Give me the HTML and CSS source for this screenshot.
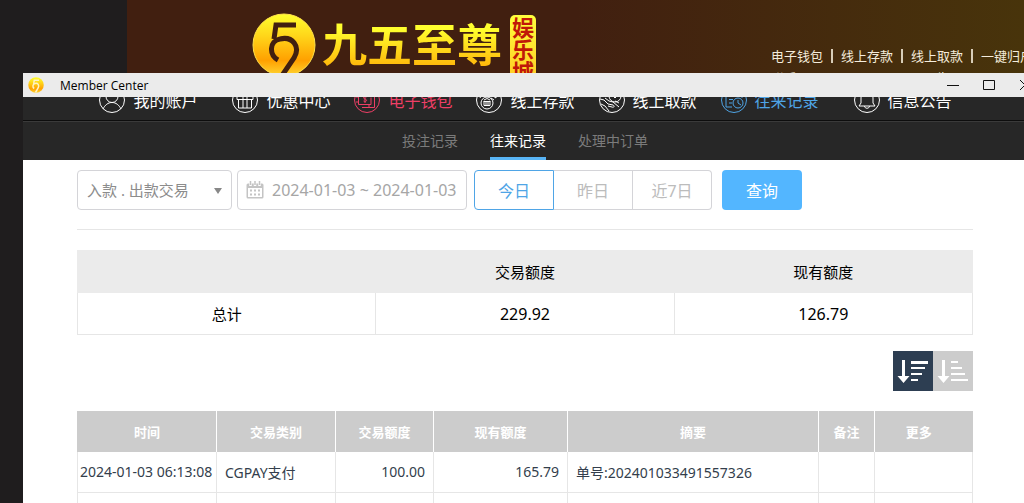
FILE: index.html
```html
<!DOCTYPE html>
<html lang="zh-CN">
<head>
  <meta charset="UTF-8" />
  <meta name="viewport" content="width=device-width, initial-scale=1.0"/>
  <title>Member Center</title>
  <link rel="stylesheet" href="styles.css">
</head>
<body>

  <header class="site-header">
    <a href="#" class="logo">
      <svg class="logo-mark" viewBox="0 0 64 64" aria-hidden="true">
        <defs>
          <linearGradient id="gold" x1="0" y1="0" x2="0" y2="1">
            <stop offset="0" stop-color="#ffff2e"/>
            <stop offset="0.35" stop-color="#ffd61a"/>
            <stop offset="0.75" stop-color="#ffa000"/>
            <stop offset="1" stop-color="#ffd633"/>
          </linearGradient>
        </defs>
        <circle cx="32" cy="32" r="31" fill="url(#gold)" stroke="#ffe14a"/>
        <path d="M44 12H24L22 26" fill="none" stroke="#411f10" stroke-width="5"/>
        <path d="M26 47C17 42 17 28 28 26C40 23 49 33 42 45L29 64" fill="none" stroke="#411f10" stroke-width="5"/>
      </svg>
      <span class="logo-name">九五至尊</span>
      <span class="logo-badge">娱乐城</span>
    </a>
    <nav class="quick">
      <div class="quick-row">
        <a href="#">电子钱包</a>
        <a href="#">线上存款</a>
        <a href="#">线上取款</a>
        <a href="#">一键归户</a>
      </div>
      <div class="quick-row quick-more">
        <a href="#">联系</a>
        <a href="#">公告</a>
      </div>
    </nav>
  </header>

  <div class="window">
    <div class="titlebar">
      <svg class="app-icon" viewBox="0 0 64 64" aria-hidden="true">
        <circle cx="32" cy="32" r="31" fill="url(#gold)"/>
        <path d="M44 13H25L23 26M25 46C17 41 18 28 28 26C40 23 46 33 41 43L30 62" fill="none" stroke="#fff3c4" stroke-width="6"/>
      </svg>
      <span class="title">Member Center</span>
      <div class="controls">
        <button aria-label="Minimize"><svg viewBox="0 0 12 12"><path d="M0 6.5h12"/></svg></button>
        <button aria-label="Maximize"><svg viewBox="0 0 12 12"><path d="M.5 1.5h11v9H.5z"/></svg></button>
        <button aria-label="Close"><svg viewBox="0 0 12 12"><path d="M1 1l10 10M11 1L1 11"/></svg></button>
      </div>
    </div>

    <div class="view">
      <nav class="main-nav">
        <a href="#">
          <svg viewBox="0 0 28 28"><circle cx="14" cy="14" r="12.5"/><circle cx="14" cy="10.5" r="6"/><path d="M5 23c2-4 5-6.500 9-6.500s7 2.500 9 6.500"/></svg>
          我的账户
        </a>
        <div class="nav-group">
          <a href="#">
            <svg viewBox="0 0 28 28"><circle cx="14" cy="14" r="12.500"/><path d="M6 9.500h16v4H6zM7.500 13.500v8.500h13v-8.500M12 9.500V22M16 9.500V22M14 9C9 8 8 4 11 5s3 4 3 4 0-3 3-4 2 3-3 4"/></svg>
            优惠中心
          </a>
          <a href="#" class="hot">
            <svg viewBox="0 0 28 28"><circle cx="14" cy="14" r="12.500"/><path d="M18 18.500H5.500V8H20v3M9 21.500h12.500V11M16 21.500v-3h2v-7M3 11h2.500M3 16h2.500M13.500 11c-3-1.500-4 1.500-1.500 2s2 3.500-1.500 2M12 9.500V17"/></svg>
            电子钱包
          </a>
          <a href="#">
            <svg viewBox="0 0 28 28"><circle cx="14" cy="14" r="12.500"/><circle cx="12" cy="17" r="6"/><path d="M8.500 15.500h7M9 15.500v4h6v-4M11 15.500v4M13 15.500v4M9 14l3-1.500 3 1.500M5 12c2-5 6-7 10-5l2 3M18 9l3 1M20 6v6l3-2M16 12l3 2"/></svg>
            线上存款
          </a>
          <a href="#">
            <svg viewBox="0 0 28 28"><circle cx="14" cy="14" r="12.500"/><circle cx="17" cy="10" r="6"/><path d="M14 9l3 3 3-3M2 13l4 1 4 4 5 1c2 1 1 3-1 2l-4-1M7 12l4 3 4 1 6 5M3 18l4 2 4 5M21 17l-4-2"/></svg>
            线上取款
          </a>
          <a href="#" class="current">
            <svg viewBox="0 0 28 28"><circle cx="14" cy="14" r="12.500"/><path d="M12 21H6V6h13v5M9 10h7M9 13.500h4M9 17h3M6 6l3-2h13v8"/><circle cx="18" cy="17" r="5"/><path d="M18 14v3l3 2"/></svg>
            往来记录
          </a>
        </div>
        <a href="#">
          <svg viewBox="0 0 28 28"><circle cx="14" cy="14" r="12.500"/><path d="M6 20h16l-2-3v-5c0-4-2-6-6-6s-6 2-6 6v5zM11.500 20c0 3 5 3 5 0"/></svg>
          信息公告
        </a>
      </nav>

      <nav class="sub-nav">
        <a href="#">投注记录</a>
        <a href="#" class="active">往来记录</a>
        <a href="#">处理中订单</a>
      </nav>

      <main class="content">
        <form class="filters">
          <div class="select-box">
            <select aria-label="交易类型">
              <option>入款 . 出款交易</option>
            </select>
          </div>
          <label class="date-box">
            <svg viewBox="0 0 18 18" aria-hidden="true">
              <path d="M2 2.500h14a1.500 1.500 0 0 1 1.500 1.500v12a1.500 1.500 0 0 1-1.500 1.500H2A1.500 1.500 0 0 1 .5 16V4A1.500 1.500 0 0 1 2 2.500z" fill="#c4c4c4"/>
              <path d="M2 7h14v9H2z" fill="#fff"/>
              <path d="M4 8.500h2v2H4zM8 8.500h2v2H8zM12 8.500h2v2h-2zM4 12.500h2v2H4zM8 12.500h2v2H8zM12 12.500h2v2h-2z" fill="#c4c4c4"/>
              <path d="M4.500 0v5M9 0v5M13.500 0v5" stroke="#fff" stroke-width="2.500"/>
              <path d="M4.500 0v4M9 0v4M13.500 0v4" stroke="#c4c4c4" stroke-width="1.500"/>
            </svg>
            <input type="text" value="2024-01-03 ~ 2024-01-03" aria-label="日期">
          </label>
          <div class="days">
            <button type="button" class="on">今日</button>
            <button type="button">昨日</button>
            <button type="button">近7日</button>
          </div>
          <button type="button" class="search">查询</button>
        </form>

        <table class="summary">
          <thead>
            <tr><th></th><th>交易额度</th><th>现有额度</th></tr>
          </thead>
          <tbody>
            <tr><td>总计</td><td class="total">229.92</td><td class="total">126.79</td></tr>
          </tbody>
        </table>

        <div class="sort">
          <button class="on" aria-label="降序">
            <svg viewBox="0 0 40 40"><path d="M9 9h3v16h4.500l-6 7-6-7H9zM18 10h17v3H18zM18 16h14v2H18zM18 22h11v2H18zM18 28h7v2h-7z"/></svg>
          </button>
          <button aria-label="升序">
            <svg viewBox="0 0 40 40"><path d="M9 9h3v16h4.500l-6 7-6-7H9zM18 10h7v2h-7zM18 16h11v2H18zM18 22h14v2H18zM18 28h17v2H18z"/></svg>
          </button>
        </div>

        <table class="records">
          <colgroup>
            <col class="c-time"><col class="c-type"><col class="c-amount"><col class="c-balance"><col class="c-summary"><col class="c-note"><col class="c-more">
          </colgroup>
          <thead>
            <tr>
              <th>时间</th>
              <th>交易类别</th>
              <th>交易额度</th>
              <th>现有额度</th>
              <th>摘要</th>
              <th>备注</th>
              <th class="more">更多</th>
            </tr>
          </thead>
          <tbody>
            <tr>
              <td class="time">2024-01-03 06:13:08</td>
              <td>CGPAY支付</td>
              <td class="num">100.00</td>
              <td class="num">165.79</td>
              <td>单号:202401033491557326</td>
              <td></td>
              <td></td>
            </tr>
            <tr>
              <td></td><td></td><td></td><td></td><td></td><td></td><td></td>
            </tr>
          </tbody>
        </table>
      </main>
    </div>
  </div>

</body>
</html>
```
FILE: styles.css
```css
* {
  box-sizing: border-box;
}
body {
  margin: 0;
  min-height: 100vh;
  overflow: hidden;
  background: #1f1d1e;
  font-family: "Noto Sans", "Noto Sans CJK SC", sans-serif;
}
a {
  color: inherit;
  text-decoration: none;
}
button,
input,
select {
  font-family: inherit;
}
button {
  padding: 0;
  border: none;
  cursor: pointer;
}

/* site header */
.site-header {
  display: flex;
  align-items: flex-start;
  gap: 235px;
  height: 100px;
  margin-left: 127px;
  padding-left: 125px;
  overflow: hidden;
  white-space: nowrap;
  background: linear-gradient(90deg, #411f10 50%, #48340b);
}
.logo {
  display: flex;
  flex-shrink: 0;
  padding-top: 13px;
}
.logo-mark {
  width: 64px;
  height: 64px;
}
.logo-name {
  width: 188px;
  margin-left: 6px;
  font-family: "Noto Sans CJK SC", sans-serif;
  font-size: 45px;
  font-weight: bold;
  line-height: 60px;
  color: transparent;
  background: linear-gradient(#ffff2e 20%, #ffa200 80%);
  background-clip: text;
  -webkit-background-clip: text;
}
.logo-badge {
  width: 26px;
  height: 78px;
  margin-top: 2px;
  padding-top: 2px;
  border-radius: 5px;
  background: linear-gradient(#ffff3c, #ffc020);
  color: #c01808;
  font-family: "Noto Sans CJK SC", sans-serif;
  font-size: 22px;
  font-weight: bold;
  line-height: 26px;
  writing-mode: vertical-rl;
}
.quick {
  padding-top: 49px;
  color: #f4ecdc;
  font-size: 13px;
  line-height: 14px;
}
.quick-row {
  display: flex;
}
.quick-row a + a {
  margin-left: 8px;
  padding-left: 8px;
  border-left: 2px solid #d8cdb8;
}
.quick-more {
  padding-top: 8px;
}
.quick-more a + a {
  margin-left: 126px;
  padding-left: 0;
  border-left: none;
}

/* floating window */
.window {
  position: absolute;
  top: 73px;
  left: 23px;
  right: -3px;
  bottom: 0;
  display: flex;
  flex-direction: column;
  background: #fff;
}
.titlebar {
  display: flex;
  align-items: center;
  height: 24px;
  padding-left: 5px;
  background: #ebebeb;
}
.app-icon {
  width: 16px;
  height: 16px;
}
.title {
  margin-left: 16px;
  font-family: "Open Sans", sans-serif;
  font-size: 12px;
}
.controls {
  display: flex;
  gap: 24px;
  margin-left: auto;
  margin-right: -4px;
}
.controls button {
  display: flex;
  background: none;
}
.controls svg {
  width: 12px;
  height: 12px;
  fill: none;
  stroke: #111;
}
.view {
  flex: 1;
  overflow: hidden;
}

/* navigation, scrolled slightly under the title bar */
.main-nav {
  display: flex;
  justify-content: center;
  gap: 34px;
  height: 42px;
  margin-top: -18px;
  border-bottom: 1px solid #0d0d0d;
  background: #272727;
  color: #fff;
  font-size: 16px;
}
.nav-group {
  display: flex;
  gap: 23px;
}
.main-nav a {
  display: flex;
  align-items: center;
  gap: 7px;
}
.main-nav svg {
  width: 28px;
  height: 28px;
  fill: none;
  stroke: currentColor;
}
.main-nav .hot {
  color: #ee3f66;
}
.main-nav .current {
  color: #4fa5e6;
}
.sub-nav {
  display: flex;
  justify-content: center;
  gap: 32px;
  height: 39px;
  border-top: 1px solid #3a3a3a;
  background: #272727;
  color: #7b7b7b;
  font-size: 14px;
  line-height: 38px;
}
.sub-nav .active {
  border-bottom: 3px solid #58b4f5;
  color: #fff;
}

/* filters */
.content {
  padding: 10px 54px 0;
}
.filters {
  display: flex;
  padding-bottom: 19px;
  border-bottom: 1px solid #e6e6e6;
}
.select-box {
  position: relative;
  width: 155px;
  margin-right: 5px;
}
.select-box::after {
  content: "";
  position: absolute;
  top: 18px;
  right: 10px;
  border: 4px solid transparent;
  border-top: 6px solid #888;
  border-bottom: none;
  pointer-events: none;
}
.select-box select {
  width: 100%;
  height: 40px;
  padding: 0 9px;
  appearance: none;
  border: 1px solid #d4d4d8;
  border-radius: 4px;
  background: #fff;
  color: #8c8c8c;
  font-size: 15px;
}
.date-box {
  display: flex;
  align-items: center;
  width: 230px;
  height: 40px;
  margin-right: 7px;
  padding-left: 8px;
  border: 1px solid #d4d4d8;
  border-radius: 4px;
}
.date-box svg {
  flex-shrink: 0;
  width: 18px;
  height: 18px;
}
.date-box input {
  width: 100%;
  min-width: 0;
  padding: 0 0 0 8px;
  border: none;
  outline: none;
  background: none;
  color: #a6a6a6;
  font-size: 16px;
}
.days {
  display: flex;
  margin-right: 10px;
}
.days button {
  width: 80px;
  height: 40px;
  border: 1px solid #d4d4d8;
  background: #fff;
  color: #bcbcbc;
  font-size: 16px;
}
.days button + button {
  width: 79px;
  border-left: none;
}
.days button:last-child {
  border-radius: 0 4px 4px 0;
}
.days .on {
  border-color: #4fa5e6;
  border-radius: 4px 0 0 4px;
  color: #4fa5e6;
}
.search {
  width: 80px;
  height: 40px;
  border-radius: 4px;
  background: #53b6ff;
  color: #fff;
  font-size: 16px;
}

/* tables */
table {
  width: 100%;
  table-layout: fixed;
  border-collapse: collapse;
}
.summary {
  margin-top: 20px;
  font-size: 15px;
  text-align: center;
}
.summary th {
  height: 42px;
  padding: 0;
  border: 1px solid #ebebeb;
  background: #ebebeb;
  font-weight: normal;
}
.summary td {
  height: 42px;
  padding: 0;
  border: 1px solid #e6e6e6;
}
.summary .total {
  font-size: 16px;
}
.sort {
  display: flex;
  justify-content: flex-end;
  margin: 16px 0 20px;
}
.sort button {
  width: 40px;
  height: 40px;
  background: #ccc;
}
.sort .on {
  background: #2d3e52;
}
.sort svg {
  display: block;
  fill: #fff;
}
.records {
  color: #333e4c;
  font-size: 14px;
}
.records th {
  height: 41px;
  padding: 0;
  border-left: 1px solid #ccc;
  background: #ccc;
  color: #fff;
  font-size: 13px;
}
.records th + th {
  border-left-color: #fff;
}
.records th.more {
  padding-right: 10px;
}
.records td {
  height: 40px;
  padding: 0 8px;
  border: 1px solid #e6e6e6;
  border-top: none;
  white-space: nowrap;
}
.records .time {
  padding: 0 2px;
}
.records .num {
  text-align: right;
}
.c-time { width: 139px; }
.c-type { width: 119px; }
.c-amount { width: 98px; }
.c-balance { width: 134px; }
.c-summary { width: 251px; }
.c-note { width: 56px; }
```
